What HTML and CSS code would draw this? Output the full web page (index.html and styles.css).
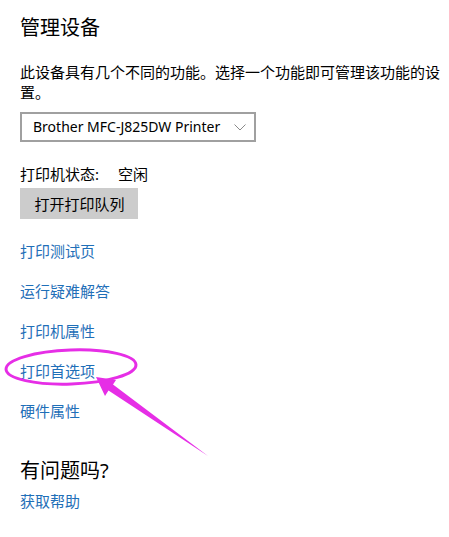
FILE: index.html
```html
<!DOCTYPE html>
<html lang="zh-CN">
  <head>
    <meta charset="UTF-8" />
    <meta name="viewport" content="width=device-width, initial-scale=1.0" />
    <title>管理设备</title>
    <link rel="stylesheet" href="styles.css">
  </head>
  <body>
    <div class="page">
      <h1 class="page-title">管理设备</h1>
      <p class="desc">此设备具有几个不同的功能。选择一个功能即可管理该功能的设置。</p>

      <div class="select">
        <span class="select-value">Brother MFC-J825DW Printer</span>
        <svg class="chevron" width="12" height="7" viewBox="0 0 12 7" fill="none" stroke="#8a8a8a" stroke-width="1">
          <path d="M0.5 0.5L6 6L11.5 0.5"/>
        </svg>
      </div>

      <div class="status">
        <span class="status-label">打印机状态:</span>
        <span>空闲</span>
      </div>
      <button class="btn">打开打印队列</button>

      <ul class="links">
        <li><a href="#">打印测试页</a></li>
        <li><a href="#">运行疑难解答</a></li>
        <li><a href="#">打印机属性</a></li>
        <li><a href="#">打印首选项</a></li>
        <li><a href="#">硬件属性</a></li>
      </ul>

      <h2 class="page-title help-title">有问题吗?</h2>
      <a class="help-link" href="#">获取帮助</a>

      <!-- hand-drawn marker around 打印首选项 -->
      <svg class="marker" width="449" height="537" viewBox="0 0 449 537">
        <ellipse cx="71" cy="367" rx="65" ry="17" fill="none" stroke="#e62ee6" stroke-width="3" transform="rotate(-2 71 367)"/>
        <polygon points="96,377 116,380 113,384.5 208,456 108.5,390.5 105,396" fill="#e62ee6"/>
      </svg>
    </div>
  </body>
</html>
```

FILE: styles.css
```css
:root {
  --text: #000000;
  --link: #1f6fb8;
  --muted: #8a8a8a;
  --btn: #cccccc;
  --mark: #e62ee6;
}

body,
html {
  margin: 0;
  padding: 0;
  background: #ffffff;
  color: var(--text);
  font-family: "Noto Sans", "Noto Sans CJK SC", sans-serif;
  font-size: 15px;
  line-height: 20px;
}

.page {
  position: relative;
  padding: 14px 0 0 20px;
  min-height: 523px;
}

.page-title {
  margin: 0;
  font-size: 20px;
  line-height: 28px;
  font-weight: 400;
}

.desc {
  margin: 20px 0 0;
}

.select {
  box-sizing: border-box;
  width: 236px;
  height: 30px;
  margin-top: 10px;
  padding: 0 8px 0 11px;
  border: 2px solid #a0a0a0;
  display: flex;
  align-items: center;
  justify-content: space-between;
  font-size: 14px;
}

.select-value {
  white-space: nowrap;
}

.chevron {
  margin-top: 1px;
}

.status {
  margin-top: 22px;
  display: flex;
}

.status-label {
  width: 98px;
}

.btn {
  box-sizing: border-box;
  width: 118px;
  height: 31px;
  margin-top: 4px;
  padding: 0 0 0 1px;
  border: none;
  background: var(--btn);
  color: var(--text);
  font: inherit;
}

.links {
  list-style: none;
  margin: 22px 0 0;
  padding: 0;
  display: flex;
  flex-direction: column;
  gap: 20px;
}

.links a,
.help-link {
  color: var(--link);
  text-decoration: none;
}

.help-title {
  margin-top: 36px;
}

.help-link {
  display: inline-block;
  margin-top: 6px;
}

.marker {
  position: absolute;
  top: 0;
  left: 0;
  pointer-events: none;
}
```
